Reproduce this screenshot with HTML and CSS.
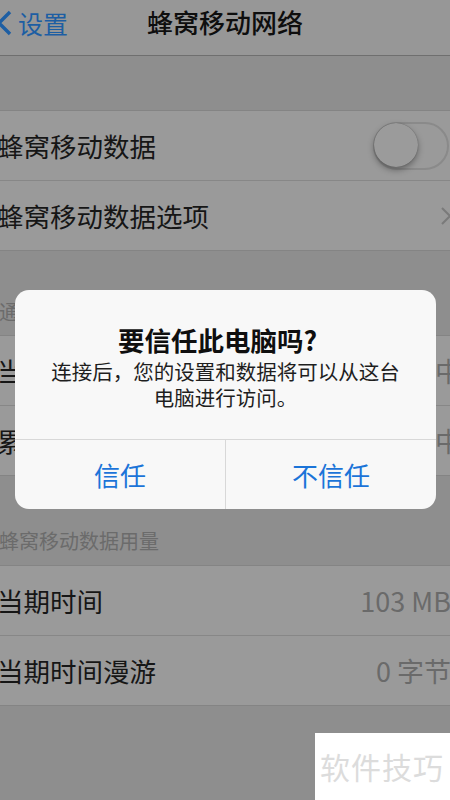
FILE: index.html
```html
<!DOCTYPE html>
<html lang="zh-CN">
  <head>
    <meta charset="UTF-8" />
    <meta name="viewport" content="width=device-width, initial-scale=1.0" />
    <title>蜂窝移动网络</title>
    <link rel="stylesheet" href="styles.css">
  </head>
  <body>
    <div id="screen">
      <div class="navbar">
        <div class="back">
          <svg class="back-icon" width="14" height="26" viewBox="0 0 14 26">
            <path d="M10 2 L-1 13 L10 24" fill="none" stroke="#1d5ea3" stroke-width="3.4" />
          </svg>
          <span>设置</span>
        </div>
        <h1 class="nav-title">蜂窝移动网络</h1>
      </div>

      <div class="gap"></div>
      <div class="group">
        <div class="row">
          <span class="label">蜂窝移动数据</span>
          <div class="toggle"><div class="knob"></div></div>
        </div>
        <div class="row">
          <span class="label">蜂窝移动数据选项</span>
          <svg class="chevron" width="12" height="20" viewBox="0 0 12 20">
            <path d="M2 2 L10 10 L2 18" fill="none" stroke="#7a7a7a" stroke-width="2" />
          </svg>
        </div>
      </div>

      <div class="section-header">通话时间</div>
      <div class="group">
        <div class="row">
          <span class="label">当前周期</span>
          <span class="value overflow">正在计算中</span>
        </div>
        <div class="row">
          <span class="label">累计时间</span>
          <span class="value overflow">正在计算中</span>
        </div>
      </div>

      <div class="section-header tall">蜂窝移动数据用量</div>
      <div class="group">
        <div class="row">
          <span class="label">当期时间</span>
          <span class="value">103 MB</span>
        </div>
        <div class="row">
          <span class="label">当期时间漫游</span>
          <span class="value">0 字节</span>
        </div>
      </div>

      <div class="alert">
        <div class="alert-body">
          <h2 class="alert-title">要信任此电脑吗?</h2>
          <p class="alert-msg">连接后，您的设置和数据将可以从这台<br>电脑进行访问。</p>
        </div>
        <div class="alert-actions">
          <button class="alert-btn">信任</button>
          <button class="alert-btn">不信任</button>
        </div>
      </div>

      <div class="watermark">软件技巧</div>
    </div>
  </body>
</html>
```

FILE: styles.css
```css
body {
  margin: 0;
  font-family: "Noto Sans CJK SC", "Noto Sans", sans-serif;
  background: #8e8e8e;
}

#screen {
  position: relative;
  width: 450px;
  height: 800px;
  overflow: hidden;
  background: #8e8e8e;
}

.navbar {
  height: 55px;
  display: flex;
  align-items: center;
  justify-content: center;
  background: #979797;
  border-bottom: 1px solid #6f6f6f;
  position: relative;
}

.back {
  position: absolute;
  left: 0;
  top: 8px;
  display: flex;
  align-items: center;
  gap: 4px;
  color: #1d5ea3;
  font-size: 25px;
  line-height: 30px;
}

.nav-title {
  margin: 0;
  font-size: 26px;
  font-weight: 500;
  color: #0e0e0e;
  line-height: 30px;
  margin-top: -12px;
}

.gap {
  height: 54px;
  border-bottom: 1px solid #848484;
}

.group {
  background: #9a9a9a;
  border-bottom: 1px solid #848484;
}

.row {
  height: 69px;
  display: flex;
  align-items: center;
  justify-content: space-between;
  border-bottom: 1px solid #878787;
  margin-left: -1px;
}

.row:last-child {
  border-bottom: none;
}

.label {
  font-size: 26.5px;
  color: #161616;
  margin-left: -2px;
}

.value {
  font-size: 27px;
  color: #6a6a6a;
  margin-right: -1px;
}

.value.overflow {
  margin-right: -12px;
}

.toggle {
  width: 72px;
  height: 44px;
  border: 2px solid #8a8a8a;
  border-radius: 24px;
  margin-right: 1px;
  position: relative;
  flex-shrink: 0;
}

.knob {
  position: absolute;
  left: -1px;
  top: -1px;
  width: 44px;
  height: 44px;
  border-radius: 50%;
  background: #9b9b9b;
  box-shadow: 0 3px 6px rgba(0, 0, 0, 0.35), 0 0 1px rgba(0, 0, 0, 0.4);
}

.chevron {
  margin-right: -2px;
}

.section-header {
  height: 85px;
  font-size: 20px;
  color: #6b6b6b;
  display: flex;
  align-items: flex-end;
  line-height: 22px;
  box-sizing: border-box;
  padding-bottom: 12px;
  margin-left: -1px;
  border-bottom: 1px solid #848484;
}

.section-header.tall {
  height: 90px;
  padding-bottom: 13px;
}

.alert {
  position: absolute;
  left: 15px;
  top: 290px;
  width: 421px;
  height: 219px;
  background: #f8f8f8;
  border-radius: 14px;
  overflow: hidden;
  display: flex;
  flex-direction: column;
}

.alert-body {
  height: 150px;
  border-bottom: 1px solid #d8d8d8;
  text-align: center;
  padding-top: 33px;
  box-sizing: border-box;
}

.alert-title {
  margin: 0;
  font-size: 26.5px;
  font-weight: 700;
  color: #0f0f0f;
  line-height: 34px;
  margin-left: -16px;
}

.alert-msg {
  margin: 0;
  margin-top: 1px;
  font-size: 20.5px;
  color: #1e1e1e;
  line-height: 26px;
  padding: 0 8px;
}

.alert-actions {
  flex: 1;
  display: flex;
}

.alert-btn {
  flex: 1;
  border: none;
  background: transparent;
  font-family: inherit;
  font-size: 26px;
  color: #1b74d8;
  padding: 0;
  margin: 0;
}

.alert-btn + .alert-btn {
  border-left: 1px solid #d8d8d8;
}

.watermark {
  position: absolute;
  left: 315px;
  top: 733px;
  width: 135px;
  height: 67px;
  background: #ffffff;
  color: #dcdcdc;
  font-size: 30px;
  line-height: 67px;
  padding-left: 5px;
  box-sizing: border-box;
  letter-spacing: 1px;
}
```
